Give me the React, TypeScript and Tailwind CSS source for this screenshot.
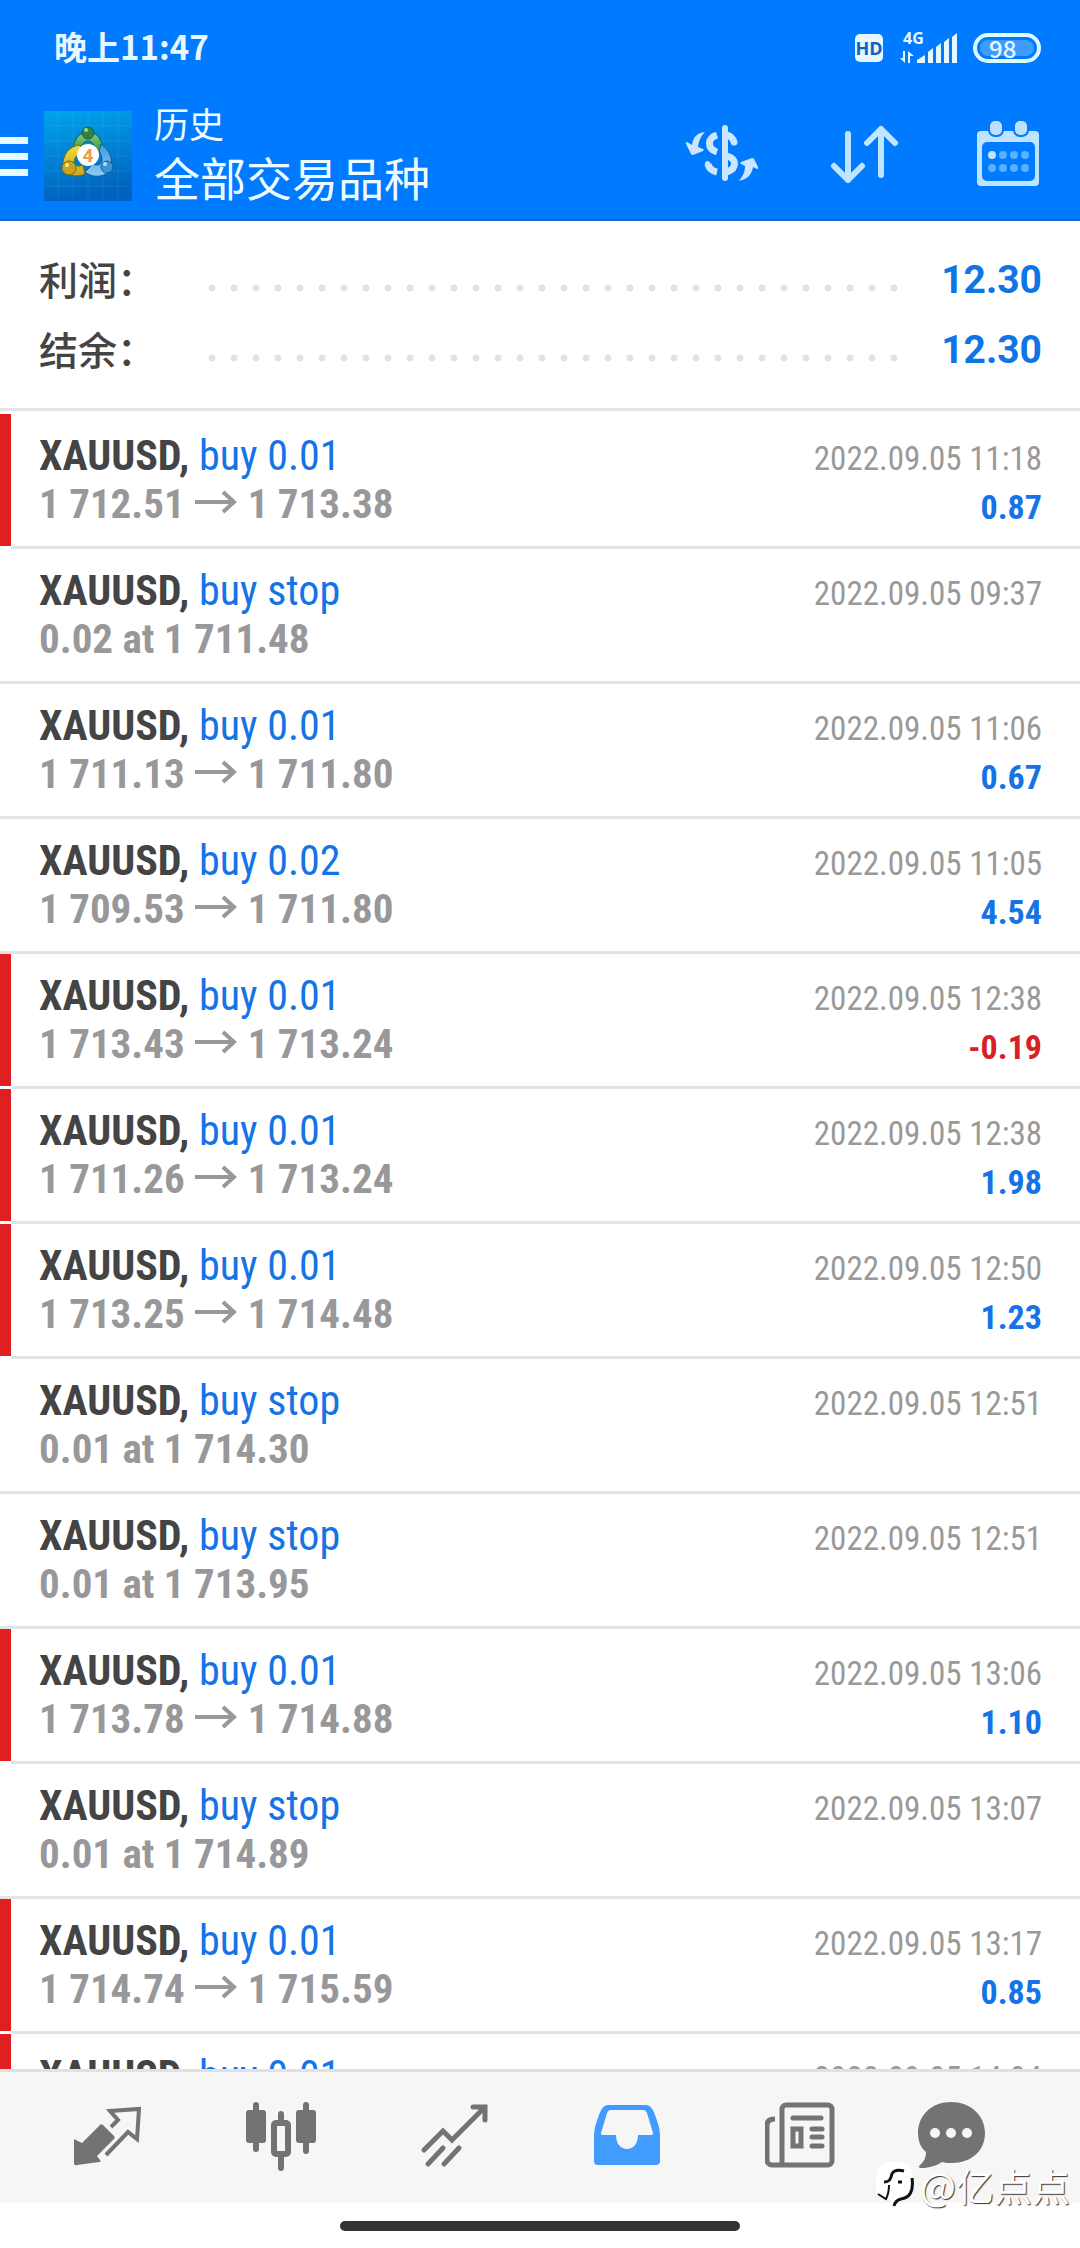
import type { ReactNode } from "react";

type Deal = {
  side: string;
  from?: string;
  to?: string;
  pending?: string;
  time: string;
  profit?: string;
  marked?: boolean;
};

const deals: Deal[] = [
  { side: "buy 0.01", from: "1 712.51", to: "1 713.38", time: "2022.09.05 11:18", profit: "0.87", marked: true },
  { side: "buy stop", pending: "0.02 at 1 711.48", time: "2022.09.05 09:37" },
  { side: "buy 0.01", from: "1 711.13", to: "1 711.80", time: "2022.09.05 11:06", profit: "0.67" },
  { side: "buy 0.02", from: "1 709.53", to: "1 711.80", time: "2022.09.05 11:05", profit: "4.54" },
  { side: "buy 0.01", from: "1 713.43", to: "1 713.24", time: "2022.09.05 12:38", profit: "-0.19", marked: true },
  { side: "buy 0.01", from: "1 711.26", to: "1 713.24", time: "2022.09.05 12:38", profit: "1.98", marked: true },
  { side: "buy 0.01", from: "1 713.25", to: "1 714.48", time: "2022.09.05 12:50", profit: "1.23", marked: true },
  { side: "buy stop", pending: "0.01 at 1 714.30", time: "2022.09.05 12:51" },
  { side: "buy stop", pending: "0.01 at 1 713.95", time: "2022.09.05 12:51" },
  { side: "buy 0.01", from: "1 713.78", to: "1 714.88", time: "2022.09.05 13:06", profit: "1.10", marked: true },
  { side: "buy stop", pending: "0.01 at 1 714.89", time: "2022.09.05 13:07" },
  { side: "buy 0.01", from: "1 714.74", to: "1 715.59", time: "2022.09.05 13:17", profit: "0.85", marked: true },
  { side: "buy 0.01", from: "1 715.02", to: "1 715.66", time: "2022.09.05 14:04", profit: "0.64", marked: true },
];

function StatusBar() {
  return (
    <div className="flex h-24 items-center justify-between pr-[39px] pl-[54px] text-[#e6f7ff]">
      <span className="mb-1 text-[33px] leading-10 font-bold">晚上11:47</span>
      <div className="flex items-center">
        <span className="mr-[17px] flex h-7 w-7 items-center justify-center rounded-[5px] bg-[#e6f7ff] font-['Open_Sans'] text-[18px] leading-7 font-bold text-[#0b62c4]">
          HD
        </span>
        <svg className="mr-[15px] h-10 w-[58px]" viewBox="0 -4 58 40" fill="currentColor" aria-label="4G">
          <text x="3" y="12" fontSize="16" fontWeight="700" fontFamily="Open Sans">
            4G
          </text>
          <path d="M5 19v12L0 26h3v-7zM8 31V19l6 5h-4v7z" />
          <path d="M17 31v-3l8-5v8zM28 31V20l5-4v15zM36 31V15l5-4v20zM44 31V10l5-4v25zM52 31V5l5-4v30z" />
        </svg>
        <span className="flex h-[30px] w-[68px] items-center rounded-full border-4 border-[#dcfaff] p-[3px]">
          <span className="flex h-full w-full items-center rounded-full bg-white/25 pl-[9px] text-[24px] leading-none font-medium">
            98
          </span>
        </span>
      </div>
    </div>
  );
}

function AppLogo() {
  return (
    <svg className="h-[90px] w-[88px] shrink-0" viewBox="0 0 88 90" role="img" aria-label="MetaTrader 4">
      <defs>
        <linearGradient id="tile" x1="0" y1="0" x2="0.2" y2="1">
          <stop offset="0" stopColor="#00a4ee" />
          <stop offset="1" stopColor="#0063bd" />
        </linearGradient>
        <linearGradient id="green" x1="0" y1="0" x2="0" y2="1">
          <stop offset="0" stopColor="#8fcf86" />
          <stop offset="1" stopColor="#2b8f3a" />
        </linearGradient>
        <linearGradient id="gold" x1="0" y1="0" x2="0" y2="1">
          <stop offset="0" stopColor="#f1dc3c" />
          <stop offset="1" stopColor="#c9a51d" />
        </linearGradient>
        <linearGradient id="sky" x1="0" y1="0" x2="0" y2="1">
          <stop offset="0" stopColor="#3d97dc" />
          <stop offset="1" stopColor="#8ccdf5" />
        </linearGradient>
      </defs>
      <rect width="88" height="90" fill="url(#tile)" />
      <path d="M14 0v90M29 0v90M44 0v90M59 0v90M74 0v90M0 15h88M0 30h88M0 45h88M0 60h88M0 75h88" stroke="#fff" strokeOpacity=".07" />
      <g strokeWidth="1">
        <path d="M29 42c-1-12 6-21 15-21s16 9 15 21l-8-2c0-6-3-10-7-10s-7 4-7 10z" fill="url(#green)" stroke="#1c5d3c" />
        <path d="M57 33c8 5 12 14 10 24-4 9-17 11-26 4l8-8c4 2 8 1 9-3 0-4-1-7-3-10z" fill="url(#sky)" stroke="#17598f" />
        <path d="M36 34c-11 1-18 10-17 22 3 9 13 11 22 7l-2-9c-4 2-8 1-9-2 0-5 3-9 8-10z" fill="url(#gold)" stroke="#70671c" />
        <circle cx="44" cy="22" r="6" fill="#2a8540" stroke="#1c5d3c" />
        <circle cx="25" cy="57" r="7" fill="#c9a51d" stroke="#70671c" />
        <circle cx="63" cy="56" r="6" fill="#3f93d3" stroke="#17598f" />
      </g>
      <circle cx="42" cy="19" r="2" fill="#9bd39a" />
      <circle cx="23" cy="54" r="2" fill="#f6e98a" />
      <circle cx="61" cy="53" r="2" fill="#b5e0fa" />
      <circle cx="44" cy="44" r="11" fill="#fff" />
      <text x="44" y="51" textAnchor="middle" fontSize="19" fontWeight="700" fontFamily="Roboto" fill="#ef9a4d">
        4
      </text>
    </svg>
  );
}

function Header() {
  return (
    <div className="flex h-[123px] items-start pr-10">
      <button type="button" aria-label="菜单" className="mt-[41px] mr-4 flex w-7 flex-col gap-[9px]">
        <span className="h-[7px] bg-[#e6fbff]" />
        <span className="h-[7px] bg-[#e6fbff]" />
        <span className="h-[7px] bg-[#e6fbff]" />
      </button>
      <div className="mt-[15px]">
        <AppLogo />
      </div>
      <div className="ml-[22px] grow text-[#effcff]">
        <p className="mt-1 text-[35px] leading-[46px]">历史</p>
        <h1 className="text-[46px] leading-[60px]">全部交易品种</h1>
      </div>
      <button type="button" aria-label="交易品种" className="mt-7 mr-[72px]">
        <svg className="h-[60px] w-[74px]" viewBox="0 0 74 60" fill="#cbe6ff">
          <rect x="38" y="1" width="6" height="56" rx="3" />
          <g fill="none" stroke="#cbe6ff" strokeWidth="7">
            <path d="M33 11c-10 3-10 14 0 17" />
            <path d="M24 40c1 4 4 7 9 8" />
            <path d="M43 11c3 1 6 3 7 7" strokeLinecap="round" />
            <path d="M43 32c10 3 10 12 0 16" />
          </g>
          <path d="M24 37a3 3 0 0 0-3 4l6-2z" />
          <path d="M21 8C12 9 9 14 8 21l-5-3c-1 0-2 1-1 2l5 10c1 1 1 1 2 1l10-4c1-1 1-2 0-2l-5-2c1-7 3-11 7-15z" />
          <path d="M55 57c9-2 13-7 14-14l4 2c1 0 1 0 1-2l-4-8c-1-1-1-1-2-1l-11 4c-1 1-1 2 0 2l4 2c0 7-3 11-6 15z" />
        </svg>
      </button>
      <button type="button" aria-label="排序" className="mt-[29px] mr-[78px]">
        <svg className="h-[60px] w-[68px]" viewBox="0 0 68 60" fill="none" stroke="#bfe6ff" strokeWidth="6" strokeLinecap="round" strokeLinejoin="round">
          <path d="M18 9v46M4 41l14 14 14-14" />
          <path d="M51 50V4M37 18L51 4l14 14" />
        </svg>
      </button>
      <button type="button" aria-label="日期" className="mt-[25px]">
        <svg className="h-[66px] w-[64px]" viewBox="0 0 64 66">
          <path d="M5 10h54a4 4 0 0 1 4 4v47a4 4 0 0 1-4 4H5a4 4 0 0 1-4-4V14a4 4 0 0 1 4-4z" fill="#bfe4ff" />
          <rect x="6" y="21" width="53" height="39" rx="5" fill="#007aff" />
          <g fill="#bfdfff" stroke="#007aff" strokeWidth="2">
            <rect x="13" y="-1" width="14" height="16" rx="6" />
            <rect x="38" y="-1" width="14" height="16" rx="6" />
          </g>
          <g fill="#57b2ff">
            <circle cx="16" cy="34" r="4" fill="#bfe8ff" />
            <circle cx="27" cy="34" r="4" />
            <circle cx="38" cy="34" r="4" />
            <circle cx="49" cy="34" r="4" />
            <circle cx="16" cy="47" r="4" />
            <circle cx="27" cy="47" r="4" />
            <circle cx="38" cy="47" r="4" />
            <circle cx="49" cy="47" r="4" />
          </g>
        </svg>
      </button>
    </div>
  );
}

function SummaryRow({ label, value }: { label: string; value: string }) {
  return (
    <div className="flex h-[70px] items-center">
      <dt className="mb-1 w-[162px] text-[39px] leading-[50px] font-medium text-[#444]">{label}</dt>
      <dd className="flex grow items-center justify-between">
        <span className="mt-4 h-2 w-[704px] bg-[radial-gradient(circle,#e2e2e2_3px,transparent_4px)] bg-[length:22px_8px]" />
        <span className="font-['Roboto'] text-[39px] leading-[50px] font-bold text-[#0f74e6]">{value}</span>
      </dd>
    </div>
  );
}

function DealRow({ deal }: { deal: Deal }) {
  const loss = deal.profit?.startsWith("-");
  return (
    <li className="flex h-[135px] shrink-0">
      {deal.marked && <span className="mb-[3px] w-[11px] shrink-0 bg-[#e02020]" />}
      <div
        className={`flex grow justify-between border-b-[3px] border-[#e3e3e3] pt-[18px] pr-[38px] font-['Roboto_Condensed','Liberation_Sans_Narrow',sans-serif] ${
          deal.marked ? "pl-[28px]" : "pl-[39px]"
        }`}
      >
        <div className="leading-[48px]">
          <p className="text-[42px] text-[#1473e6]">
            <b className="text-[#444]">XAUUSD,</b> {deal.side}
          </p>
          {deal.pending ? (
            <p className="text-[41px] font-bold text-[#98989a]">{deal.pending}</p>
          ) : (
            <p className="flex items-center text-[41px] font-bold text-[#98989a]">
              {deal.from}
              <svg className="mx-[10px] mb-1 h-6 w-[43px]" viewBox="0 0 43 24" fill="none" stroke="currentColor" strokeWidth="4">
                <path d="M0 12h40M28 2l11 10-11 10" />
              </svg>
              {deal.to}
            </p>
          )}
        </div>
        <div className="pt-[3px] text-right leading-[48px]">
          <time className="block text-[33px] text-[#999]">{deal.time}</time>
          {deal.profit && (
            <p className={`text-[34px] font-bold ${loss ? "text-[#d92027]" : "text-[#1473e6]"}`}>{deal.profit}</p>
          )}
        </div>
      </div>
    </li>
  );
}

function TabButton({ label, active, children }: { label: string; active?: boolean; children: ReactNode }) {
  return (
    <button type="button" aria-label={label} className={`flex justify-center ${active ? "text-[#429bff]" : "text-[#737373]"}`}>
      {children}
    </button>
  );
}

function TabBar() {
  return (
    <nav className="grid h-[134px] shrink-0 grid-cols-6 border-t-[3px] border-[#e1e1e1] bg-[#f6f6f6] px-[21px] pt-[29px]">
      <TabButton label="行情">
        <svg className="h-[70px] w-[70px]" viewBox="0 0 70 70">
          <path d="M27 24a2 2 0 0 1 3 0l11 11a2 2 0 0 1 0 3L24 55l3 4c1 1 1 2-1 2L4 64a2 2 0 0 1-3-2V39c0-1 1-1 2 0l6 3z" fill="currentColor" />
          <path d="M38 26l7-7-8-9 29-2-2 30-9-7-22 23" fill="none" stroke="currentColor" strokeWidth="4" />
        </svg>
      </TabButton>
      <TabButton label="图表">
        <svg className="h-[70px] w-[70px]" viewBox="0 0 70 70" fill="currentColor">
          <rect x="0" y="9" width="20" height="33" rx="3" />
          <rect x="7" y="1" width="6" height="50" rx="3" />
          <rect x="50" y="9" width="20" height="33" rx="3" />
          <rect x="57" y="1" width="6" height="52" rx="3" />
          <rect x="32" y="10" width="6" height="14" rx="3" />
          <rect x="32" y="52" width="6" height="18" rx="3" />
          <rect x="28" y="22" width="14" height="31" rx="2" fill="none" stroke="currentColor" strokeWidth="6" />
        </svg>
      </TabButton>
      <TabButton label="交易">
        <svg className="h-[70px] w-[70px]" viewBox="0 0 70 70" fill="none" stroke="currentColor" strokeWidth="5" strokeLinecap="round">
          <path d="M5 49l19-19 9 9L65 7M54 6h12v13" />
          <path d="M24 47L9 63M40 47L25 63" />
        </svg>
      </TabButton>
      <TabButton label="历史" active>
        <svg className="h-[70px] w-[70px]" viewBox="0 0 70 70" fill="currentColor">
          <path
            fillRule="evenodd"
            d="M16 4h38c4 0 7 4 9 10 3 8 5 14 5 20v26a4 4 0 0 1-4 4H6a4 4 0 0 1-4-4V34c0-6 2-12 5-20 2-6 5-10 9-10zm3 5c-2 0-3 1-4 3L9 32c0 1 0 2 2 2h13c0 9 5 14 11 14s11-5 11-14h13c2 0 2-1 2-2l-6-20c-1-2-2-3-4-3z"
          />
        </svg>
      </TabButton>
      <TabButton label="新闻">
        <svg className="h-[70px] w-[70px]" viewBox="0 0 70 70" fill="none" stroke="currentColor" strokeWidth="5">
          <path d="M17 64V8a4 4 0 0 1 4-4h42a4 4 0 0 1 4 4v52a4 4 0 0 1-4 4H7a5 5 0 0 1-5-5V24c0-4 3-6 8-6" />
          <path d="M28 17h28M47 28h10M47 36h10M47 45h10" strokeLinecap="round" />
          <rect x="28" y="28" width="8" height="17" />
        </svg>
      </TabButton>
      <TabButton label="聊天">
        <svg className="h-[70px] w-[112px]" viewBox="0 0 112 70" fill="currentColor">
          <path d="M34 1c19 0 34 13 34 31S54 62 35 62c-4 0-7 0-10-1-6 4-14 6-21 6-2 0-3-1-1-3 5-4 6-9 6-13C3 46 1 39 1 32 1 14 15 1 34 1z" />
          <g fill="#f6f6f6">
            <circle cx="18" cy="32" r="5" />
            <circle cx="34" cy="32" r="5" />
            <circle cx="50" cy="32" r="5" />
          </g>
        </svg>
      </TabButton>
    </nav>
  );
}

function Watermark() {
  return (
    <div className="absolute right-[10px] bottom-[38px] flex items-center gap-[6px] text-white">
      <svg className="h-[46px] w-[38px]" viewBox="0 0 38 46">
        <rect width="37" height="38" rx="14" fill="#fff" />
        <path d="M28 9c-8-2-12 0-13 6-1 4-3 5-7 5M22 20h4" fill="none" stroke="#111" strokeWidth="3" />
        <path d="M13 23c0 6-1 10-3 14l-8-5" fill="none" stroke="#111" strokeWidth="2" />
        <path d="M36 16c2 14-3 20-11 21-4 1-6 3-7 7" fill="none" stroke="#111" strokeWidth="3" />
      </svg>
      <span className="text-[38px] leading-[50px] [text-shadow:1px_1px_1px_#333]">@亿点点</span>
    </div>
  );
}

export default function App() {
  return (
    <div className="relative flex h-screen flex-col overflow-hidden bg-white font-['Noto_Sans_CJK_SC',sans-serif]">
      <header className="shrink-0 border-b-2 border-[#1a6bbd] bg-[#007aff]">
        <StatusBar />
        <Header />
      </header>

      <dl className="mb-[3px] h-[190px] shrink-0 border-b-[3px] border-[#e3e3e3] pt-[24px] pr-[38px] pl-[39px]">
        <SummaryRow label="利润：" value="12.30" />
        <SummaryRow label="结余：" value="12.30" />
      </dl>

      <ul className="flex min-h-0 grow flex-col overflow-hidden">
        {deals.map((deal, i) => (
          <DealRow key={i} deal={deal} />
        ))}
      </ul>

      <TabBar />
      <div className="flex h-[45px] shrink-0 justify-center bg-white pt-[18px]">
        <span className="h-[10px] w-[400px] rounded-full bg-[#333]" />
      </div>
      <Watermark />
    </div>
  );
}
